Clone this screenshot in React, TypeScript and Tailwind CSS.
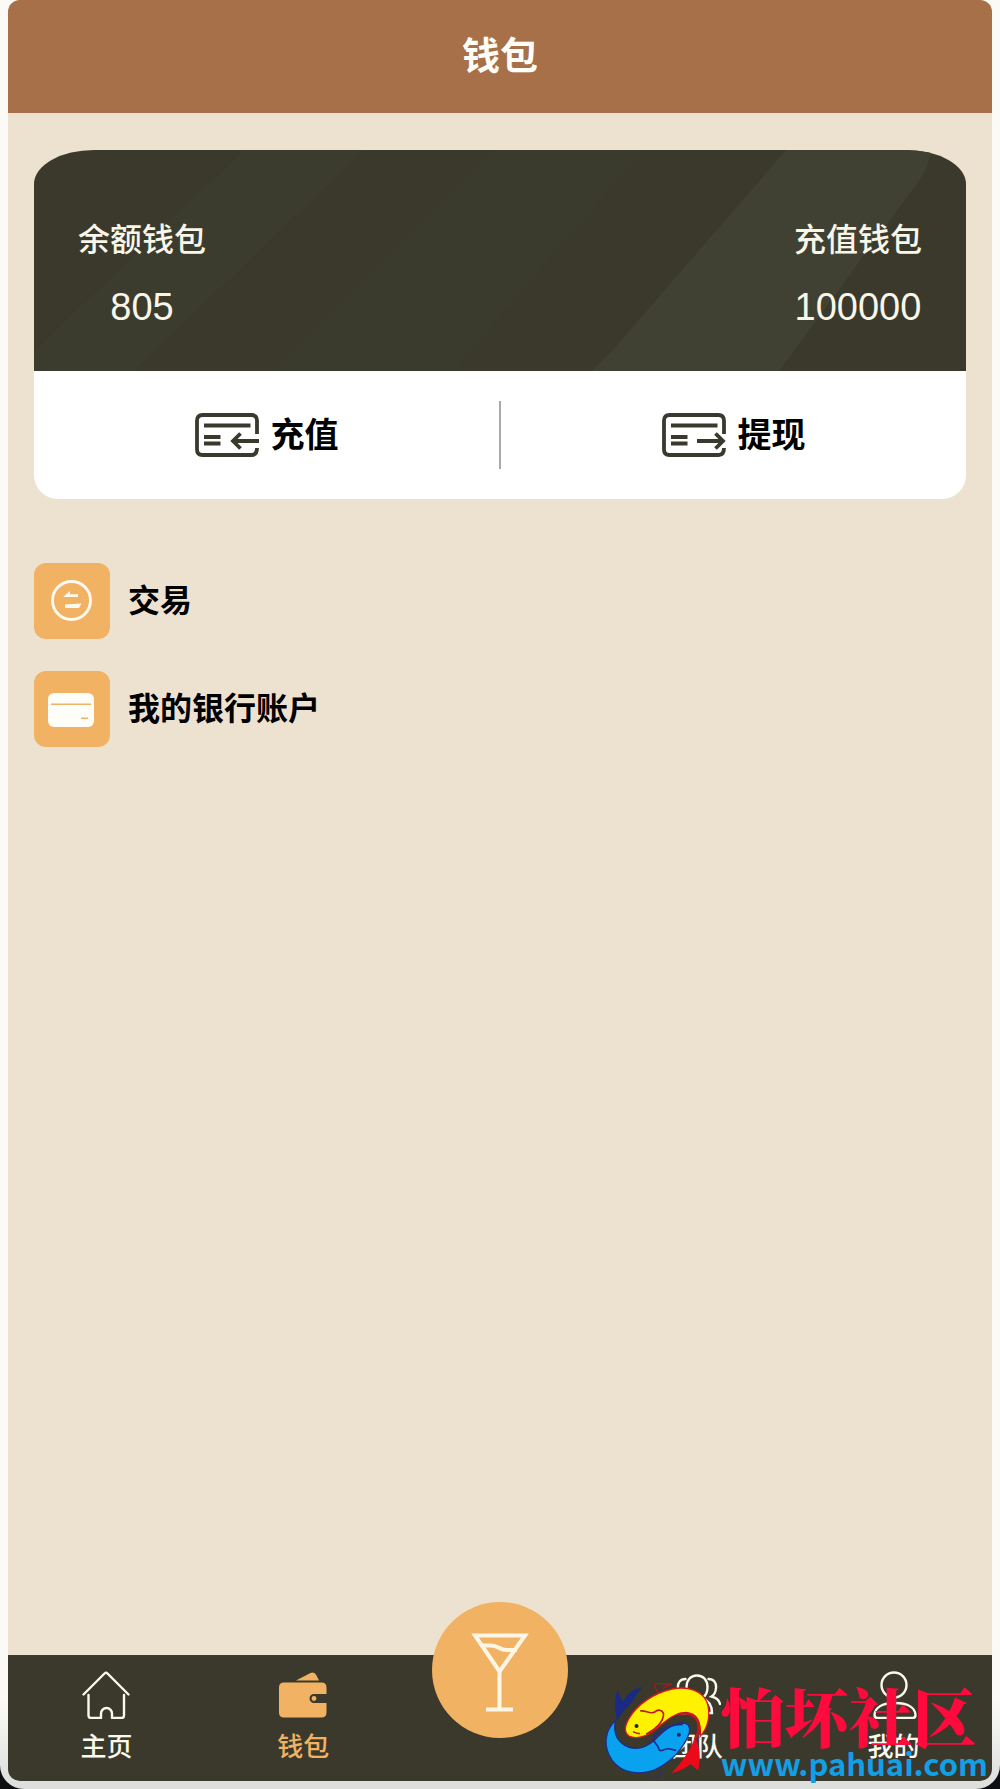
import type { ReactNode } from 'react';

type NavItem = {
  label: string;
  icon: ReactNode;
  active?: boolean;
};

const HomeIcon = () => (
  <svg viewBox="0 0 48 48" className="size-12" fill="none" stroke="currentColor" strokeWidth="2.400" strokeLinecap="round" strokeLinejoin="round">
    <path d="M1.500 23.500 22.500 2.500q1.500-1.500 3 0L46.500 23.500" />
    <path d="M6.500 24v20.500q0 2.500 2.500 2.500h10v-4.500a5.500 5.500 0 0 1 11 0V47h9.500q2.500 0 2.500-2.500V24" />
  </svg>
);

const WalletIcon = () => (
  <svg viewBox="0 0 48 48" className="size-12" fill="currentColor">
    <path d="M17 9.500 31.500 2q4-1.500 6 2.500l2.500 5Z" />
    <path d="M5 11.500h37.500q5 0 5 5V23H35a4.400 4.400 0 0 0 0 9h12.500v9.500q0 5-5 5H5q-5 0-5-5v-25q0-5 5-5Z" />
    <circle cx="35" cy="27.500" r="2.400" />
  </svg>
);

const TeamIcon = () => (
  <svg viewBox="0 0 48 48" className="size-12" fill="none" stroke="currentColor" strokeWidth="2.400" strokeLinecap="round">
    <path d="M24 4.500c-6.500 0-10.500 5-10.500 11.500 0 5 2 9 5 11C12 29.500 9 34 9 42h30c0-7-3-12.500-9.500-15 3-2 5-6 5-11C34.500 9.500 30.500 4.500 24 4.500Z" />
    <path d="M12.500 8C7 8 4.500 12 5 17c.3 4 2 7 4.500 8.500C4 27 1.500 30 1 33" />
    <path d="M35.500 8c5.500 0 8 4 7.500 9-.3 4-2 7-4.500 8.500C44 27 46.500 30 47 33" />
  </svg>
);

const UserIcon = () => (
  <svg viewBox="0 0 48 48" className="size-12" fill="none" stroke="currentColor" strokeWidth="2.400" strokeLinejoin="round">
    <circle cx="24" cy="14" r="12.500" />
    <path d="M4.500 44C5 36 13 32 25 32s20 4 20.500 12q0 3-3 3h-35q-3 0-3-3Z" />
  </svg>
);

const CardArrowIcon = ({ direction }: { direction: 'in' | 'out' }) => (
  <svg viewBox="0 0 64 44" className="h-11 w-16" fill="none" stroke="#3a392e" strokeWidth="3.800">
    <path d="M62 21V7.500q0-5.500-5.500-5.500H7.500q-5.500 0-5.500 5.500v29q0 5.500 5.500 5.500h49q5.500 0 5.500-7" />
    <path d="M9 12.500h46.500M9 24h16.500M9 30.500h16.500" />
    {direction === 'in' ? (
      <path d="M64 28H38M45.500 20.500 38 28l7.500 7.500" />
    ) : (
      <path d="M35 28h26M53.500 20.500 61 28l-7.500 7.500" />
    )}
  </svg>
);

const ExchangeIcon = () => (
  <svg viewBox="0 0 76 76" className="size-full">
    <circle cx="37.500" cy="37.500" r="19" fill="none" stroke="#fffaf0" strokeWidth="2.900" />
    <path d="M29 34l7-6v3.200h8V34ZM47.500 40.500 45 45H31v-3.500Z" fill="#fffaf0" />
  </svg>
);

const BankCardIcon = () => (
  <svg viewBox="0 0 76 76" className="size-full">
    <rect x="14" y="22" width="46" height="34" rx="6" fill="#fffdf8" />
    <path d="M17 33.200h40M47 47.200h7" stroke="#f1b263" strokeWidth="1.500" />
  </svg>
);

const CocktailIcon = () => (
  <svg viewBox="0 0 136 136" className="size-full" fill="none" stroke="#fff6e6" strokeWidth="4">
    <path d="M43 33.500h50L67.500 69.500ZM67.500 69v38M54 107.500h27" />
    <path d="M50 43.500h9c7 0 9 4.500 15 4.500h11" />
  </svg>
);

const FishLogo = () => (
  <svg viewBox="20 60 350 300" className="h-[100px] w-[117px] shrink-0">
    <path d="M182 98 171 74q0-6 6-6l46 1-28 13" fill="none" stroke="#c8121e" strokeWidth="3" />
    <path d="M155 347c20 6 36 2 34-10l-4-16" fill="none" stroke="#1d2f8f" strokeWidth="3" />
    {/* blue fish */}
    <path d="M60 86c4 16 10 26 18 36 10-22 28-38 58-44-22 20-26 40-42 56-18 16-28 30-34 48-8-30-10-64 0-96Z" fill="#182a85" />
    <path
      d="M54 178c-8 38 6 66 38 80 28 10 56 0 80-22 24-24 48-48 84-50 18 0 24 14 18 34-14 38-50 82-98 104-50 22-104 12-132-26-28-42-24-86 10-120Z"
      fill="#08a2ee"
      stroke="#1c2d8f"
      strokeWidth="4"
    />
    <path d="M256 190c-38 0-80 18-88 42-4 12 14 16 18 36 10 4 18-8 32-4l18 4" fill="none" stroke="#1c2d8f" strokeWidth="5" />
    <circle cx="244" cy="221" r="6" fill="#162766" />
    {/* yellow fish */}
    <path
      d="M308 226c26-28 32-70 20-104-14-32-56-48-104-38-56 12-106 48-128 86-16 26-16 46 0 56 18 8 46 2 66-12 34-24 60-58 104-60 32 2 46 28 42 72Z"
      fill="#fff200"
      stroke="#dc1420"
      strokeWidth="4"
    />
    <path d="M128 150c14-4 28 10 42 4 12-10 24-8 28 4 2 24-26 48-52 62M107 212c8 5 14 6 20 6" fill="none" stroke="#b9181d" strokeWidth="5" />
    <circle cx="117" cy="195" r="6" fill="#1f2718" />
    <path d="M292 226c-10 42-40 76-70 112 22-8 40-14 56-28 10 4 14 12 24 18 8-36 6-68-10-102Z" fill="#ec0919" />
    <path d="M240 160c28-8 52 2 60 20 8 18 4 36-8 56" fill="none" stroke="#c41720" strokeWidth="7" />
  </svg>
);

const leftNav: NavItem[] = [
  { label: '主页', icon: <HomeIcon /> },
  { label: '钱包', icon: <WalletIcon />, active: true },
];

const rightNav: NavItem[] = [
  { label: '团队', icon: <TeamIcon /> },
  { label: '我的', icon: <UserIcon /> },
];

const menu = [
  { label: '交易', icon: <ExchangeIcon /> },
  { label: '我的银行账户', icon: <BankCardIcon /> },
];

const NavLink = ({ label, icon, active }: NavItem) => (
  <a
    href="#"
    className={`flex flex-1 flex-col items-center gap-2 pt-4 text-[26px] leading-10 font-medium ${
      active ? 'text-[#f1b263]' : 'text-[#fbf9ee]'
    }`}
  >
    {icon}
    {label}
  </a>
);

const App = () => {
  return (
    <div className="min-h-screen bg-[#0d0f12] font-['Liberation_Sans','Noto_Sans_CJK_SC',sans-serif]">
      <div className="relative flex min-h-screen flex-col rounded-b-3xl bg-linear-to-b from-[#fbfaf7] from-95% to-[#dcdedb] px-2 pb-2">
        <div className="flex flex-1 flex-col rounded-t-xl rounded-b-xl bg-[#ede2d0]">
          <header className="flex h-[113px] items-center justify-center rounded-t-xl bg-[#a87048]">
            <h1 className="text-[38px] font-bold text-[#fffdf7]">钱包</h1>
          </header>

          <main className="flex-1 px-[26px] pt-[37px]">
            <section className="overflow-hidden rounded-b-3xl">
              <div className="relative overflow-hidden rounded-t-[60px_34px] bg-[#3a392c]">
                <svg viewBox="0 0 932 221" preserveAspectRatio="none" className="absolute inset-0 size-full">
                  <path d="M210 0h120L100 221H0v-20Z" fill="#3b3c2e" />
                  <path d="M460 0h150L420 221H240Z" fill="#3b3b2d" />
                  <path d="M752 0h146q-4 18-14 32L745 221H558l20-20Z" fill="#404133" />
                </svg>
                <div className="relative flex justify-between px-11 pt-16 pb-9 text-center text-[#f7f6e9]">
                  <div>
                    <div className="text-[32px] leading-[53px] font-medium">余额钱包</div>
                    <div className="mt-3 text-[38px] leading-[56px]">805</div>
                  </div>
                  <div>
                    <div className="text-[32px] leading-[53px] font-medium">充值钱包</div>
                    <div className="mt-3 text-[38px] leading-[56px]">100000</div>
                  </div>
                </div>
              </div>
              <div className="flex h-32 items-center bg-white text-[34px] font-bold text-black">
                <button type="button" className="flex flex-1 items-center justify-center gap-3">
                  <CardArrowIcon direction="in" />
                  充值
                </button>
                <span className="h-[68px] w-0.5 bg-[#aaaaaa]" />
                <button type="button" className="flex flex-1 items-center justify-center gap-3">
                  <CardArrowIcon direction="out" />
                  提现
                </button>
              </div>
            </section>

            <ul className="mt-16 space-y-8">
              {menu.map((item) => (
                <li key={item.label}>
                  <a href="#" className="flex items-center gap-[18px] text-[32px] font-bold text-black">
                    <span className="size-[76px] rounded-xl bg-[#f1b263]">{item.icon}</span>
                    {item.label}
                  </a>
                </li>
              ))}
            </ul>
          </main>

          <nav className="relative flex h-[126px] rounded-b-xl bg-[#3a392c]">
            {leftNav.map((item) => (
              <NavLink key={item.label} {...item} />
            ))}
            <div className="flex-1" />
            {rightNav.map((item) => (
              <NavLink key={item.label} {...item} />
            ))}
            <button
              type="button"
              aria-label="酒"
              className="absolute -top-[53px] left-1/2 size-[136px] -translate-x-1/2 rounded-full bg-[#f1b263]"
            >
              <CocktailIcon />
            </button>
          </nav>
        </div>

        <div className="pointer-events-none absolute right-3 bottom-2 flex items-end">
          <FishLogo />
          <div className="flex flex-col">
            <span className="font-['Noto_Serif_CJK_SC','Noto_Sans_CJK_SC',serif] text-[64px] leading-[62px] font-black text-[#ff0a3c]">怕坏社区</span>
            <span className="font-['Noto_Sans_CJK_SC',sans-serif] text-[31px] leading-9 font-bold text-[#129fe6]">www.pahuai.com</span>
          </div>
        </div>
      </div>
    </div>
  );
};

export default App;
